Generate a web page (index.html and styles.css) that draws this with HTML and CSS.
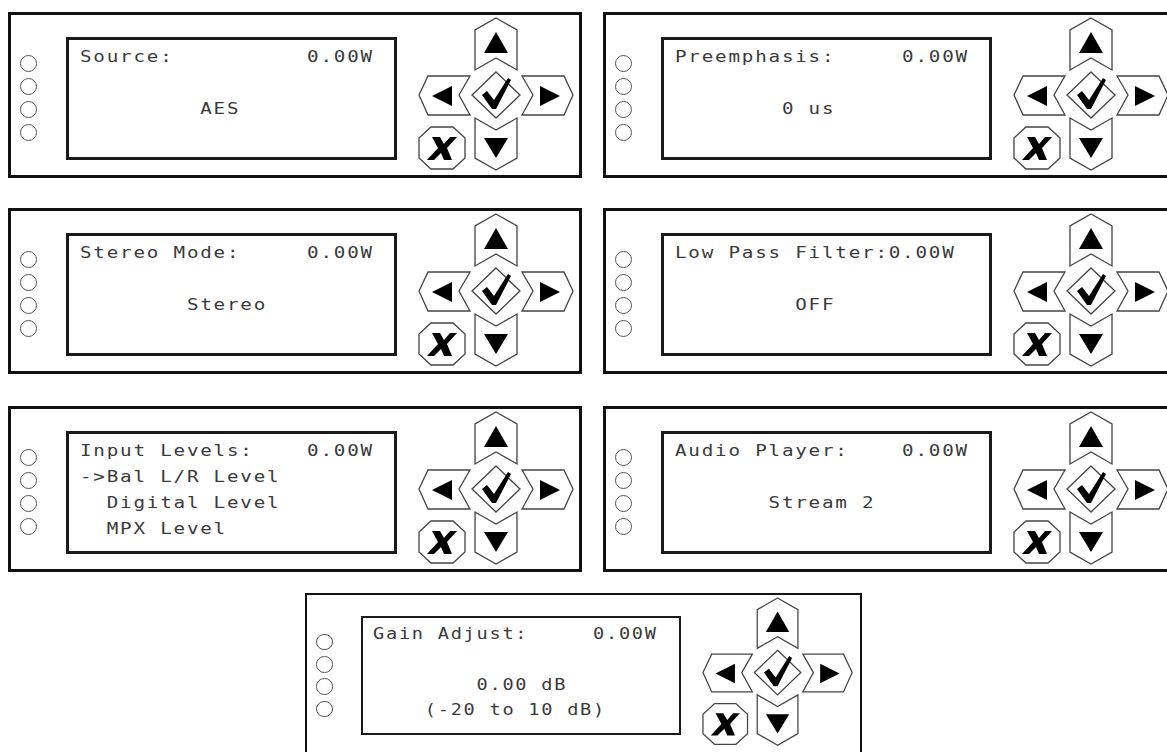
FILE: index.html
```html
<!DOCTYPE html>
<html lang="en">
<head>
    <meta charset="UTF-8">
    <meta name="viewport" content="width=device-width, initial-scale=1.0">
    <title>Audio Menu Screens</title>
    <link rel="stylesheet" href="styles.css">
</head>
<body>
    <!-- shared front panel keypad -->
    <svg class="defs" aria-hidden="true">
        <symbol id="keypad" viewBox="0 0 156 154">
            <g fill="#fff" stroke="#444" stroke-width="1.3" stroke-linejoin="miter">
                <polygon points="78,1 99,13 99,53 78,41 57,53 57,13"/>
                <polygon points="78,55 102,78 78,101 54,78"/>
                <polygon points="1,78 10,59 52,59 41,78 52,98 10,98"/>
                <polygon points="155,78 146,59 104,59 115,78 104,98 146,98"/>
                <polygon points="57,101 78,113 99,101 99,141 78,153 57,141"/>
                <polygon points="13,110 35,110 47,121 47,141 35,152 13,152 1,141 1,121"/>
            </g>
            <g fill="#000">
                <polygon points="78,15 90,36 66,36"/>
                <polygon points="14,79 34,69 34,89"/>
                <polygon points="142,79 122,69 122,89"/>
                <polygon points="78,141 66,121 90,121"/>
                <polygon points="64,78 69,74 76,83 90,61 93,63 78,92 74,92"/>
                <polygon points="14,120 22,120 26,127 32,120 39,120 29,131 34,143 26,143 23,136 16,143 9,143 20,131"/>
            </g>
        </symbol>
    </svg>

    <div class="row row-1">
        <div class="panel">
            <div class="leds"><span></span><span></span><span></span><span></span></div>
            <div class="lcd"><div class="lcd-text">Source:          0.00W

         AES</div></div>
            <svg class="keypad"><use href="#keypad"/></svg>
        </div>
        <div class="panel">
            <div class="leds"><span></span><span></span><span></span><span></span></div>
            <div class="lcd"><div class="lcd-text">Preemphasis:     0.00W

        0 us</div></div>
            <svg class="keypad"><use href="#keypad"/></svg>
        </div>
    </div>

    <div class="row row-2">
        <div class="panel">
            <div class="leds"><span></span><span></span><span></span><span></span></div>
            <div class="lcd"><div class="lcd-text">Stereo Mode:     0.00W

        Stereo</div></div>
            <svg class="keypad"><use href="#keypad"/></svg>
        </div>
        <div class="panel">
            <div class="leds"><span></span><span></span><span></span><span></span></div>
            <div class="lcd"><div class="lcd-text">Low Pass Filter:0.00W

         OFF</div></div>
            <svg class="keypad"><use href="#keypad"/></svg>
        </div>
    </div>

    <div class="row row-3">
        <div class="panel">
            <div class="leds"><span></span><span></span><span></span><span></span></div>
            <div class="lcd"><div class="lcd-text">Input Levels:    0.00W
->Bal L/R Level
  Digital Level
  MPX Level</div></div>
            <svg class="keypad"><use href="#keypad"/></svg>
        </div>
        <div class="panel">
            <div class="leds"><span></span><span></span><span></span><span></span></div>
            <div class="lcd"><div class="lcd-text">Audio Player:    0.00W

       Stream 2</div></div>
            <svg class="keypad"><use href="#keypad"/></svg>
        </div>
    </div>

    <div class="row row-4">
        <div class="panel panel-small">
            <div class="leds"><span></span><span></span><span></span><span></span></div>
            <div class="lcd"><div class="lcd-text">Gain Adjust:     0.00W

        0.00 dB
    (-20 to 10 dB)</div></div>
            <svg class="keypad"><use href="#keypad"/></svg>
        </div>
    </div>
</body>
</html>
```

FILE: styles.css
```css
html, body {
    overflow: hidden;
}
body {
    margin: 0;
    padding: 12px 0 0 8px;
    background-color: #ffffff;
    width: 1167px;
    height: 752px;
    box-sizing: border-box;
}
.defs {
    display: none;
}
.row {
    display: flex;
    gap: 21px;
}
.row-1 {
    margin-bottom: 30px;
}
.row-2 {
    margin-bottom: 32px;
}
.row-3 {
    margin-bottom: 21px;
}
.row-4 {
    justify-content: center;
    margin-left: -8px;
}
.panel {
    flex: none;
    display: flex;
    align-items: flex-start;
    width: 574px;
    height: 166px;
    box-sizing: border-box;
    border: 3px solid #111;
    padding-left: 9px;
}
.panel-small {
    zoom: 0.969;
}
.leds {
    display: flex;
    flex-direction: column;
    gap: 6px;
    margin-top: 40px;
}
.leds span {
    display: block;
    width: 17px;
    height: 17px;
    box-sizing: border-box;
    border: 1.5px solid #555;
    border-radius: 50%;
}
.lcd {
    flex: none;
    width: 331px;
    height: 123px;
    box-sizing: border-box;
    margin: 22px 0 0 29px;
    padding: 4px 0 0 11px;
    border: 3px solid #1a1a1a;
}
.lcd-text {
    font-family: "DejaVu Sans Mono", monospace;
    font-size: 16px;
    letter-spacing: 1.5px;
    line-height: 26px;
    color: #3a3a3a;
    white-space: pre;
    transform: scaleX(1.2);
    transform-origin: 0 0;
}
.keypad {
    flex: none;
    width: 156px;
    height: 154px;
    margin: 2px 0 0 21px;
}
```
